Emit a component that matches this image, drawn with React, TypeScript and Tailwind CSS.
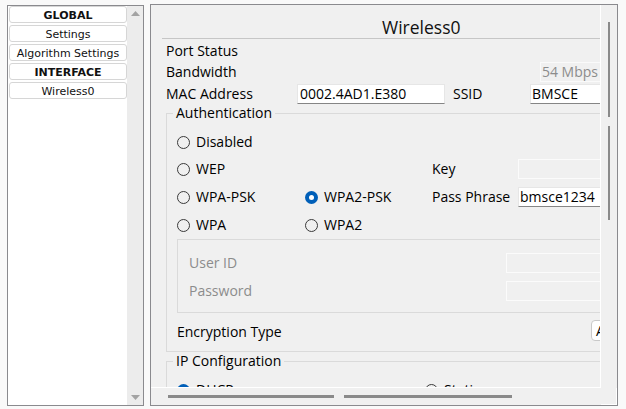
import React from "react";

function Radio({ checked }: { checked?: boolean }) {
  if (checked) {
    return (
      <span className="w-[13px] h-[13px] rounded-full bg-[#005fb8] flex items-center justify-center shrink-0">
        <span className="w-[5px] h-[5px] rounded-full bg-white" />
      </span>
    );
  }
  return <span className="w-[13px] h-[13px] rounded-full border border-[#3a3a3a] shrink-0" />;
}

function RadioItem({ label, checked, width }: { label: string; checked?: boolean; width: string }) {
  return (
    <div className={`flex items-center gap-[6px] ${width}`}>
      <Radio checked={checked} />
      <span>{label}</span>
    </div>
  );
}

function LeftButton({ label, bold }: { label: string; bold?: boolean }) {
  return (
    <div
      className={`h-[17px] w-[118px] rounded-[3px] border border-[#d6d6d6] bg-white flex items-center justify-center pt-[1px] text-[11px] leading-[15px] text-[#111] ${
        bold ? "font-bold" : ""
      }`}
    >
      {label}
    </div>
  );
}

export default function App() {
  return (
    <div className="w-[626px] h-[409px] bg-[#f9f9f9] flex items-start pl-[7px] pt-[4px] gap-[6px] overflow-hidden">
      {/* Left panel */}
      <div className="mt-[1px] w-[137px] h-[401px] border border-[#8a8a8e] bg-white flex font-['DejaVu_Sans',sans-serif]">
        <div className="w-[119px] flex flex-col gap-[2px] pl-[1px]">
          <LeftButton label="GLOBAL" bold />
          <LeftButton label="Settings" />
          <LeftButton label="Algorithm Settings" />
          <LeftButton label="INTERFACE" bold />
          <LeftButton label="Wireless0" />
        </div>
        <div className="w-[16px] bg-[#ececec] flex flex-col justify-between items-center pt-[5px] pb-[5px]">
          <svg width="9" height="5" viewBox="0 0 9 5">
            <polygon points="0,5 9,5 4.5,0" fill="#a3a3a3" />
          </svg>
          <svg width="9" height="5" viewBox="0 0 9 5">
            <polygon points="0,0 9,0 4.5,5" fill="#a3a3a3" />
          </svg>
        </div>
      </div>

      {/* Right panel */}
      <div className="w-[468px] h-[402px] border border-[#8a8a8e] bg-[#f0f0f0] grid grid-cols-[450px_16px] grid-rows-[383px_17px] font-['Open_Sans',sans-serif] text-[14px] leading-[20px] text-black">
        <div className="overflow-hidden border-r border-b border-white">
          <div className="w-[560px] flex flex-col">
            {/* Header */}
            <div className="ml-[11px] pt-[12px] border-b border-[#c6c6c6] pl-[220px]">
              <div className="text-[17.5px] leading-[21px] text-[#111]">Wireless0</div>
            </div>

            <div className="pl-[15px] mt-[2px] h-[20px] flex items-center">Port Status</div>
            <div className="pl-[15px] mt-[1px] h-[20px] flex items-center">
              <span className="w-[374px]">Bandwidth</span>
              <div className="w-[61px] h-[20px] border border-[#fafafa] bg-[#f0f0f0] text-right pr-[2px] text-[#8c8c8c] leading-[18px]">
                54 Mbps
              </div>
            </div>
            <div className="pl-[15px] mt-[2px] h-[20px] flex items-center">
              <span className="w-[131px]">MAC Address</span>
              <div className="w-[148px] h-[20px] bg-white border border-[#e6e6e6] border-b-[#858585] pl-[2px] leading-[18px]">
                0002.4AD1.E380
              </div>
              <span className="ml-[8px] w-[77px]">SSID</span>
              <div className="w-[90px] h-[20px] bg-white border border-[#e6e6e6] border-b-[#858585] pl-[1px] leading-[18px]">
                BMSCE
              </div>
            </div>

            {/* Authentication */}
            <fieldset className="ml-[15px] w-[520px] border border-[#dadada]">
              <legend className="ml-[6px] px-[3px] leading-[18px]">Authentication</legend>
              <div className="pl-[10px] pt-[10px] flex flex-col">
                <div className="h-[20px] flex items-center">
                  <RadioItem label="Disabled" width="w-[128px]" />
                </div>
                <div className="mt-[7px] h-[20px] flex items-center">
                  <RadioItem label="WEP" width="w-[128px]" />
                  <div className="w-[127px]" />
                  <span className="w-[86px]">Key</span>
                  <div className="w-[100px] h-[20px] border border-[#fbfbfb] bg-[#f0f0f0]" />
                </div>
                <div className="mt-[8px] h-[20px] flex items-center">
                  <RadioItem label="WPA-PSK" width="w-[128px]" />
                  <RadioItem label="WPA2-PSK" checked width="w-[127px]" />
                  <span className="w-[86px]">Pass Phrase</span>
                  <div className="w-[100px] h-[20px] bg-white border border-[#e6e6e6] border-b-[#858585] pl-[1px] leading-[18px]">
                    bmsce1234
                  </div>
                </div>
                <div className="mt-[8px] h-[20px] flex items-center">
                  <RadioItem label="WPA" width="w-[128px]" />
                  <RadioItem label="WPA2" width="w-[127px]" />
                </div>

                <div className="mt-[4px] border border-[#dadada] pt-[13px] pb-[11px] pl-[11px] flex flex-col gap-[8px] text-[#8c8c8c]">
                  <div className="h-[20px] flex items-center">
                    <span className="w-[317px]">User ID</span>
                    <div className="w-[110px] h-[20px] border border-[#fbfbfb] bg-[#f0f0f0]" />
                  </div>
                  <div className="h-[20px] flex items-center">
                    <span className="w-[317px]">Password</span>
                    <div className="w-[110px] h-[20px] border border-[#fbfbfb] bg-[#f0f0f0]" />
                  </div>
                </div>

                <div className="mt-[7px] h-[22px] flex items-start">
                  <span className="w-[414px] mt-[2px]">Encryption Type</span>
                  <div className="w-[60px] h-[21px] rounded-[4px] border border-[#c9c9c9] bg-white pl-[4px] leading-[19px]">
                    AES
                  </div>
                </div>
                <div className="h-[9px]" />
              </div>
            </fieldset>

            {/* IP Configuration */}
            <fieldset className="ml-[15px] w-[520px] border border-[#dadada]">
              <legend className="ml-[6px] px-[3px] leading-[18px]">IP Configuration</legend>
              <div className="pl-[10px] pt-[10px] flex flex-col">
                <div className="h-[20px] flex items-center">
                  <RadioItem label="DHCP" checked width="w-[248px]" />
                  <RadioItem label="Static" width="w-[128px]" />
                </div>
                <div className="h-[30px]" />
              </div>
            </fieldset>
          </div>
        </div>

        {/* vertical scrollbar */}
        <div className="flex flex-col items-start pl-[7px] pt-[17px]">
          <div className="w-[2px] h-[95px] bg-[#8a8a8a]" />
          <div className="w-[2px] h-[94px] bg-[#8a8a8a] mt-[9px]" />
        </div>

        {/* horizontal scrollbar */}
        <div className="flex items-start pl-[17px] pt-[7px] gap-[10px]">
          <div className="w-[166px] h-[3px] bg-[#8a8a8a]" />
          <div className="w-[168px] h-[3px] bg-[#8a8a8a]" />
        </div>
        <div className="border-r border-b border-white" />
      </div>
    </div>
  );
}
